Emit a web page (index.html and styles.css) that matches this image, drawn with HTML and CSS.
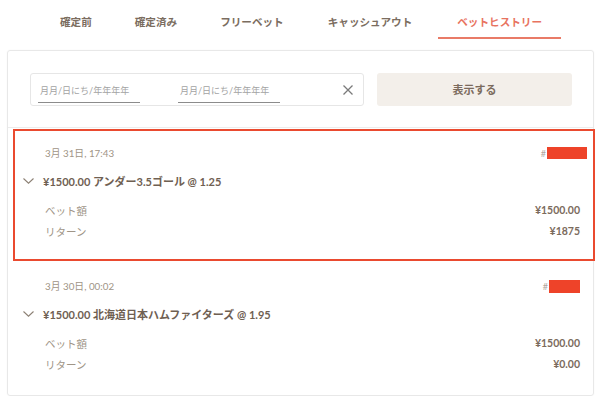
FILE: index.html
```html
<!DOCTYPE html>
<html>
    <head>
        <title>ベットヒストリー</title>
        <meta charset="utf-8">
        <link rel="stylesheet" href="styles.css">
    </head>
    <body>
        <ul class="tabs">
            <li>確定前</li>
            <li>確定済み</li>
            <li>フリーベット</li>
            <li>キャッシュアウト</li>
            <li class="current">ベットヒストリー</li>
        </ul>
        <div class="panel">
            <div class="filter">
                <div class="range">
                    <span class="date">月月/日にち/年年年年</span>
                    <span class="date">月月/日にち/年年年年</span>
                    <svg class="clear" width="12" height="12" viewBox="0 0 12 12"><path d="M1.5 1.5L10.5 10.5M10.5 1.5L1.5 10.5" stroke="#7a7a7a" stroke-width="1.3" fill="none"/></svg>
                </div>
                <div class="show">表示する</div>
            </div>
            <div class="bet marked">
                <div class="head">
                    <span class="time">3月 31日, 17:43</span>
                    <span class="id">#<i class="redact wide"></i></span>
                </div>
                <div class="title">
                    <svg class="chev" width="11" height="6" viewBox="0 0 11 6"><path d="M0.5 0.5L5.5 5.2L10.5 0.5" stroke="#8c8074" stroke-width="1.1" fill="none"/></svg>
                    ¥1500.00 アンダー3.5ゴール @ 1.25
                </div>
                <div class="row first"><span>ベット額</span><b>¥1500.00</b></div>
                <div class="row"><span>リターン</span><b>¥1875</b></div>
            </div>
            <div class="bet">
                <div class="head">
                    <span class="time">3月 30日, 00:02</span>
                    <span class="id">#<i class="redact"></i></span>
                </div>
                <div class="title">
                    <svg class="chev" width="11" height="6" viewBox="0 0 11 6"><path d="M0.5 0.5L5.5 5.2L10.5 0.5" stroke="#8c8074" stroke-width="1.1" fill="none"/></svg>
                    ¥1500.00 北海道日本ハムファイターズ @ 1.95
                </div>
                <div class="row first"><span>ベット額</span><b>¥1500.00</b></div>
                <div class="row"><span>リターン</span><b>¥0.00</b></div>
            </div>
        </div>
    </body>
</html>
```

FILE: styles.css
```css
* {
    margin: 0;
    padding: 0;
    box-sizing: border-box;
}
body {
    font-family: Lato, "Noto Sans CJK JP", sans-serif;
    color: #7b6b5d;
    background-color: #fff;
}
li {
    list-style: none;
}
.tabs {
    display: flex;
    gap: 7px;
    padding-left: 42px;
    height: 39px;
}
.tabs li {
    font-size: 10.6px;
    font-weight: bold;
    line-height: 14px;
    padding: 15px 18px 8px;
    border-bottom: 2px solid transparent;
    color: #7b6d60;
}
.tabs li:nth-child(4) {
    margin-left: 1px;
}
.tabs .current {
    color: #e8735f;
    border-bottom-color: #e97b67;
    margin-left: 1px;
    padding: 15px 19px 8px;
}
.panel {
    margin: 11px 6px 0 7px;
    height: 346px;
    border: 1px solid #e8e8e8;
    border-radius: 3px;
    box-shadow: 0 0 2px rgba(0, 0, 0, 0.04);
}
.filter {
    display: flex;
    gap: 13px;
    padding: 22px 21px 21px 22px;
}
.range {
    flex: 0 0 334px;
    height: 33px;
    border: 1px solid #e6e6e6;
    border-radius: 3px;
    display: flex;
    align-items: center;
    padding: 0 9px 0 7px;
    gap: 38px;
}
.date {
    width: 102px;
    font-size: 9px;
    color: #a3a3a3;
    line-height: 14px;
    padding: 3px 0 4px 2px;
    border-bottom: 1px solid #8c8c8c;
    margin-top: 4px;
}
.clear {
    margin-left: auto;
}
.show {
    flex: 1;
    height: 33px;
    background-color: #f3efea;
    border-radius: 3px;
    font-size: 11px;
    font-weight: bold;
    line-height: 33px;
    text-align: center;
    color: #7b6b5d;
}
.bet {
    position: relative;
    border-top: 1px solid #ececec;
    padding: 18px 13px 21px 15px;
    height: 133px;
}
.bet + .bet {
    border-top: none;
    padding-top: 19px;
}
.marked::after {
    content: '';
    position: absolute;
    left: 5px;
    right: -2px;
    top: 1px;
    bottom: -1px;
    border: 2px solid #ea4a2f;
}
.head {
    display: flex;
    justify-content: space-between;
    align-items: center;
    padding-left: 22px;
    height: 14px;
}
.time {
    font-size: 9.8px;
    color: #a09486;
}
.id {
    font-size: 9px;
    color: #b0a69c;
    display: flex;
    align-items: center;
}
.redact {
    display: inline-block;
    width: 31px;
    height: 13px;
    background-color: #ee4329;
    margin-left: 1px;
}
.redact.wide {
    width: 40px;
    height: 12px;
    margin-right: -7px;
}
.title {
    display: flex;
    align-items: center;
    gap: 9px;
    margin-top: 13px;
    height: 16px;
    font-size: 11px;
    font-weight: bold;
    color: #6f6052;
}
.row {
    display: flex;
    justify-content: space-between;
    align-items: center;
    padding-left: 22px;
    height: 16px;
    margin-top: 5px;
}
.row.first {
    margin-top: 13px;
}
.row span {
    font-size: 10.5px;
    color: #a09587;
}
.row b {
    font-size: 10.5px;
    color: #7b6b5d;
}
```
